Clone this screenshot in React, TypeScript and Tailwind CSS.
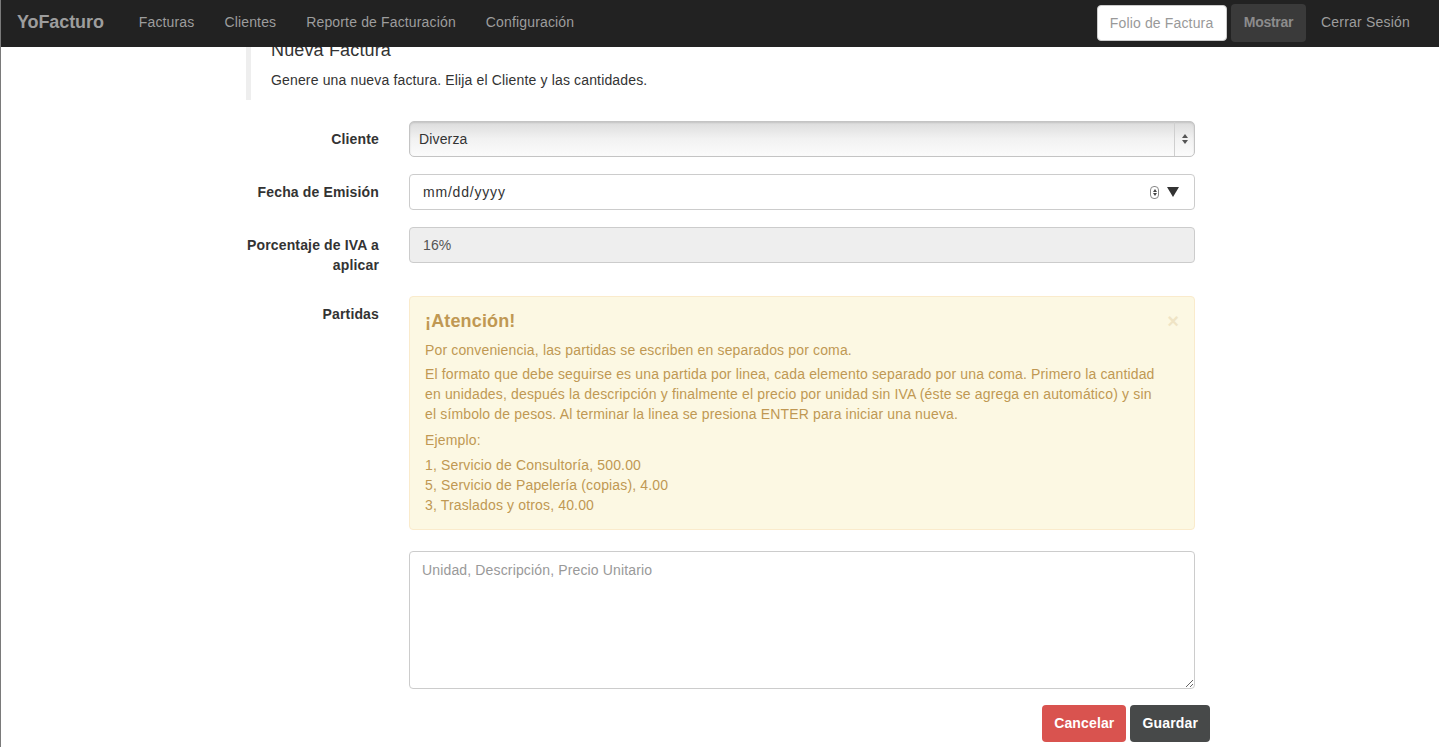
import { useState } from "react";

const navLinks = ["Facturas", "Clientes", "Reporte de Facturación", "Configuración"];

const Navbar = () => (
  <nav className="relative z-10 flex h-[47px] items-center bg-[#222222] pb-[2px] pl-[16px] pr-[29px]">
    <span className="text-[18px] font-bold tracking-[-0.1px] text-[#9d9d9d]">YoFacturo</span>
    <div className="ml-[35px] flex items-center gap-[30px] text-[14px] text-[#9d9d9d]">
      {navLinks.map((l) => (
        <span key={l}>{l}</span>
      ))}
    </div>
    <div className="ml-auto flex items-center">
      <input
        placeholder="Folio de Factura"
        className="h-[36px] w-[130px] rounded-[4px] border border-[#cccccc] bg-white px-[12px] text-[14px] text-[#555] placeholder:text-[#999] outline-none"
      />
      <button className="ml-[4px] h-[38px] rounded-[4px] bg-[#3a3a3a] px-[13px] text-[14px] font-bold tracking-[-0.3px] text-[#8c8c8c]">
        Mostrar
      </button>
      <span className="ml-[15px] text-[14px] tracking-[0.2px] text-[#9d9d9d]">Cerrar Sesión</span>
    </div>
  </nav>
);

const Label = ({ children }: { children: React.ReactNode }) => (
  <label className="w-[133px] shrink-0 pt-[8px] text-right text-[14px] font-bold leading-[20px] text-[#333]">
    {children}
  </label>
);

export default function App() {
  const [partidas, setPartidas] = useState("");

  return (
    <div className="min-h-screen border-l border-[#7a7a7a] bg-white font-['Liberation_Sans',Arial,sans-serif] tracking-[0.15px] text-[#333]">
      <Navbar />
      <main className="relative z-0 -mt-[7px] ml-[245px] w-[964px]">
        {/* Callout */}
        <div className="border-l-[5px] border-[#eeeeee] pb-[10px] pl-[20px]">
          <h4 className="text-[18px] font-light leading-[20px] text-[#333]">Nueva Factura</h4>
          <p className="mt-[10px] text-[14px] leading-[20px]">
            Genere una nueva factura. Elija el Cliente y las cantidades.
          </p>
        </div>

        <form className="mt-[21px]" onSubmit={(e) => e.preventDefault()}>
          {/* Cliente */}
          <div className="flex w-[949px] gap-[30px]">
            <Label>Cliente</Label>
            <div className="flex h-[36px] flex-1 items-center rounded-[5px] border border-[#c4c4c4] bg-gradient-to-b from-[#dcdcdc] via-[#f2f2f2] to-[#fbfbfb] shadow-[inset_0_1px_2px_rgba(0,0,0,0.12)]">
              <span className="flex-1 pl-[9px] text-[14px] text-[#333]">Diverza</span>
              <div className="flex h-full w-[20px] flex-col items-center justify-center gap-[2px] border-l border-[#cfcfcf]">
                <span className="h-0 w-0 border-x-[3.5px] border-b-[4px] border-x-transparent border-b-[#555]" />
                <span className="h-0 w-0 border-x-[3.5px] border-t-[4px] border-x-transparent border-t-[#555]" />
              </div>
            </div>
          </div>

          {/* Fecha */}
          <div className="mt-[17px] flex w-[949px] gap-[30px]">
            <Label>Fecha de Emisión</Label>
            <div className="flex h-[36px] flex-1 items-center rounded-[4px] border border-[#cccccc] bg-white pl-[13px] pr-[15px]">
              <span className="flex-1 text-[14px] tracking-[0.8px] text-[#333]">mm/dd/yyyy</span>
              <div className="flex h-[13px] w-[9px] flex-col items-center justify-center gap-[1px] rounded-[4px] border border-[#888]">
                <span className="h-0 w-0 border-x-[2px] border-b-[3px] border-x-transparent border-b-[#444]" />
                <span className="h-0 w-0 border-x-[2px] border-t-[3px] border-x-transparent border-t-[#444]" />
              </div>
              <span className="ml-[8px] h-0 w-0 border-x-[6px] border-t-[10px] border-x-transparent border-t-[#333]" />
            </div>
          </div>

          {/* IVA */}
          <div className="mt-[17px] flex w-[949px] gap-[30px]">
            <Label>Porcentaje de IVA a aplicar</Label>
            <div className="flex h-[36px] flex-1 items-center rounded-[4px] border border-[#cccccc] bg-[#eeeeee] px-[13px] text-[14px] text-[#555]">
              16%
            </div>
          </div>

          {/* Partidas */}
          <div className="mt-[21px] flex w-[949px] gap-[30px]">
            <Label>Partidas</Label>
            <div className="flex-1">
              <div className="relative rounded-[4px] border border-[#faebcc] bg-[#fcf8e3] py-[14px] pl-[15px] pr-[35px] text-[14px] leading-[20px] text-[#c09853]">
                <span className="absolute right-[15px] top-[14px] text-[20px] font-bold leading-[20px] text-[#c09853] opacity-20">
                  ×
                </span>
                <h4 className="text-[18px] font-bold leading-[20px]">¡Atención!</h4>
                <p className="mt-[9px]">Por conveniencia, las partidas se escriben en separados por coma.</p>
                <p className="mt-[4px]">
                  El formato que debe seguirse es una partida por linea, cada elemento separado por una coma. Primero la
                  cantidad en unidades, después la descripción y finalmente el precio por unidad sin IVA (éste se agrega en
                  automático) y sin el símbolo de pesos. Al terminar la linea se presiona ENTER para iniciar una nueva.
                </p>
                <p className="mt-[6px]">Ejemplo:</p>
                <p className="mt-[5px]">
                  1, Servicio de Consultoría, 500.00
                  <br />
                  5, Servicio de Papelería (copias), 4.00
                  <br />
                  3, Traslados y otros, 40.00
                </p>
              </div>

              <textarea
                value={partidas}
                onChange={(e) => setPartidas(e.target.value)}
                placeholder="Unidad, Descripción, Precio Unitario"
                className="mt-[21px] block h-[138px] w-full rounded-[4px] border border-[#cccccc] px-[12px] py-[8px] text-[14px] leading-[20px] text-[#555] placeholder:text-[#999] outline-none"
              />
            </div>
          </div>

          {/* Buttons */}
          <div className="mt-[16px] flex justify-end gap-[4px]">
            <button className="h-[37px] rounded-[4px] bg-[#d9534f] px-[12px] text-[14px] font-bold text-white">
              Cancelar
            </button>
            <button className="h-[37px] rounded-[4px] bg-[#474949] px-[12px] text-[14px] font-bold text-white">
              Guardar
            </button>
          </div>
        </form>
      </main>
    </div>
  );
}
